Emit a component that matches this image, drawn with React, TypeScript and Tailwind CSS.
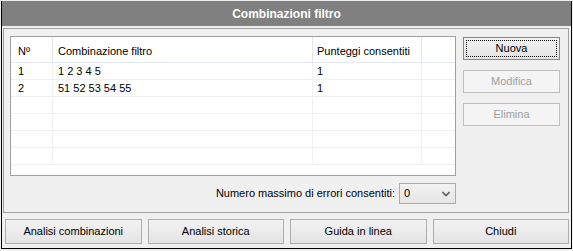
import React from "react";

const rows = [
  { n: "1", combo: "1 2 3 4 5", score: "1" },
  { n: "2", combo: "51 52 53 54 55", score: "1" },
  { n: "", combo: "", score: "" },
  { n: "", combo: "", score: "" },
  { n: "", combo: "", score: "" },
  { n: "", combo: "", score: "" },
];

const Button = ({ label, disabled, focused, className }: { label: string; disabled?: boolean; focused?: boolean; className?: string }) => (
  <div
    className={`relative flex items-center justify-center border text-[11px] ${
      disabled
        ? "border-[#bfbfbf] bg-[#f4f4f4] text-[#a0a0a0]"
        : focused
        ? "border-[#3399ff] bg-linear-to-b from-[#f2f2f2] to-[#e4e4e4] text-black"
        : "border-[#adadad] bg-linear-to-b from-[#f2f2f2] to-[#e4e4e4] text-black"
    } ${className ?? ""}`}
  >
    {focused && <div className="absolute inset-[2px] border border-dotted border-black" />}
    {label}
  </div>
);

export default function App() {
  return (
    <div className="w-[573px] h-[251px] bg-[#f0f0f0] pl-px pt-px font-['Liberation_Sans',Arial,sans-serif]">
      <div className="w-[571px] h-[248px] border border-t-0 border-black bg-[#f0f0f0] flex flex-col">
        <div className="h-[25px] bg-[#808080] flex items-center justify-center text-white font-bold text-[12px]">
          Combinazioni filtro
        </div>

        <div className="mt-[2px] ml-px mr-[2px] h-[185px] border border-[#a0a0a0] pl-[6px] pt-[7px]">
          <div className="flex">
            <div className="flex flex-col">
              <div className="w-[446px] h-[140px] border border-[#a0a0a0] bg-white overflow-hidden text-[11px] text-black">
                <div className="grid grid-cols-[42px_260px_109px_33px] h-[26px] border-b border-[#e3e8f2]">
                  <div className="border-r border-[#e5e5e5] pl-[7px] pt-[3px] flex items-center">Nº</div>
                  <div className="border-r border-[#e5e5e5] pl-[5px] pt-[3px] flex items-center">Combinazione filtro</div>
                  <div className="border-r border-[#e5e5e5] pl-[4px] pt-[3px] flex items-center">Punteggi consentiti</div>
                  <div />
                </div>
                {rows.map((r, i) => (
                  <div key={i} className="grid grid-cols-[42px_260px_109px_33px] h-[17px] border-b border-[#f0f0f0]">
                    <div className="border-r border-[#f0f0f0] pl-[7px] flex items-center">{r.n}</div>
                    <div className="border-r border-[#f0f0f0] pl-[5px] flex items-center">{r.combo}</div>
                    <div className="border-r border-[#f0f0f0] pl-[4px] flex items-center">{r.score}</div>
                    <div />
                  </div>
                ))}
              </div>

              <div className="mt-[7px] flex items-center justify-end gap-[4px] text-[11px] text-black">
                <span>Numero massimo di errori consentiti:</span>
                <div className="w-[57px] h-[21px] border border-[#acacac] bg-linear-to-b from-[#f2f2f2] to-[#e5e5e5] flex items-center justify-between pl-[4px] pr-[5px]">
                  <span>0</span>
                  <svg width="8" height="6" viewBox="0 0 8 6">
                    <path d="M0.5 1 L4 4.5 L7.5 1" fill="none" stroke="#606060" strokeWidth="1.6" />
                  </svg>
                </div>
              </div>
            </div>

            <div className="ml-[7px] mt-px flex flex-col gap-[10px]">
              <Button label="Nuova" focused className="w-[97px] h-[23px]" />
              <Button label="Modifica" disabled className="w-[97px] h-[23px]" />
              <Button label="Elimina" disabled className="w-[97px] h-[23px]" />
            </div>
          </div>
        </div>

        <div className="mt-[6px] ml-[3px] mr-[2px] flex gap-[6px]">
          <Button label="Analisi combinazioni" className="flex-1 h-[25px]" />
          <Button label="Analisi storica" className="flex-1 h-[25px]" />
          <Button label="Guida in linea" className="flex-1 h-[25px]" />
          <Button label="Chiudi" className="flex-1 h-[25px]" />
        </div>
      </div>
    </div>
  );
}
